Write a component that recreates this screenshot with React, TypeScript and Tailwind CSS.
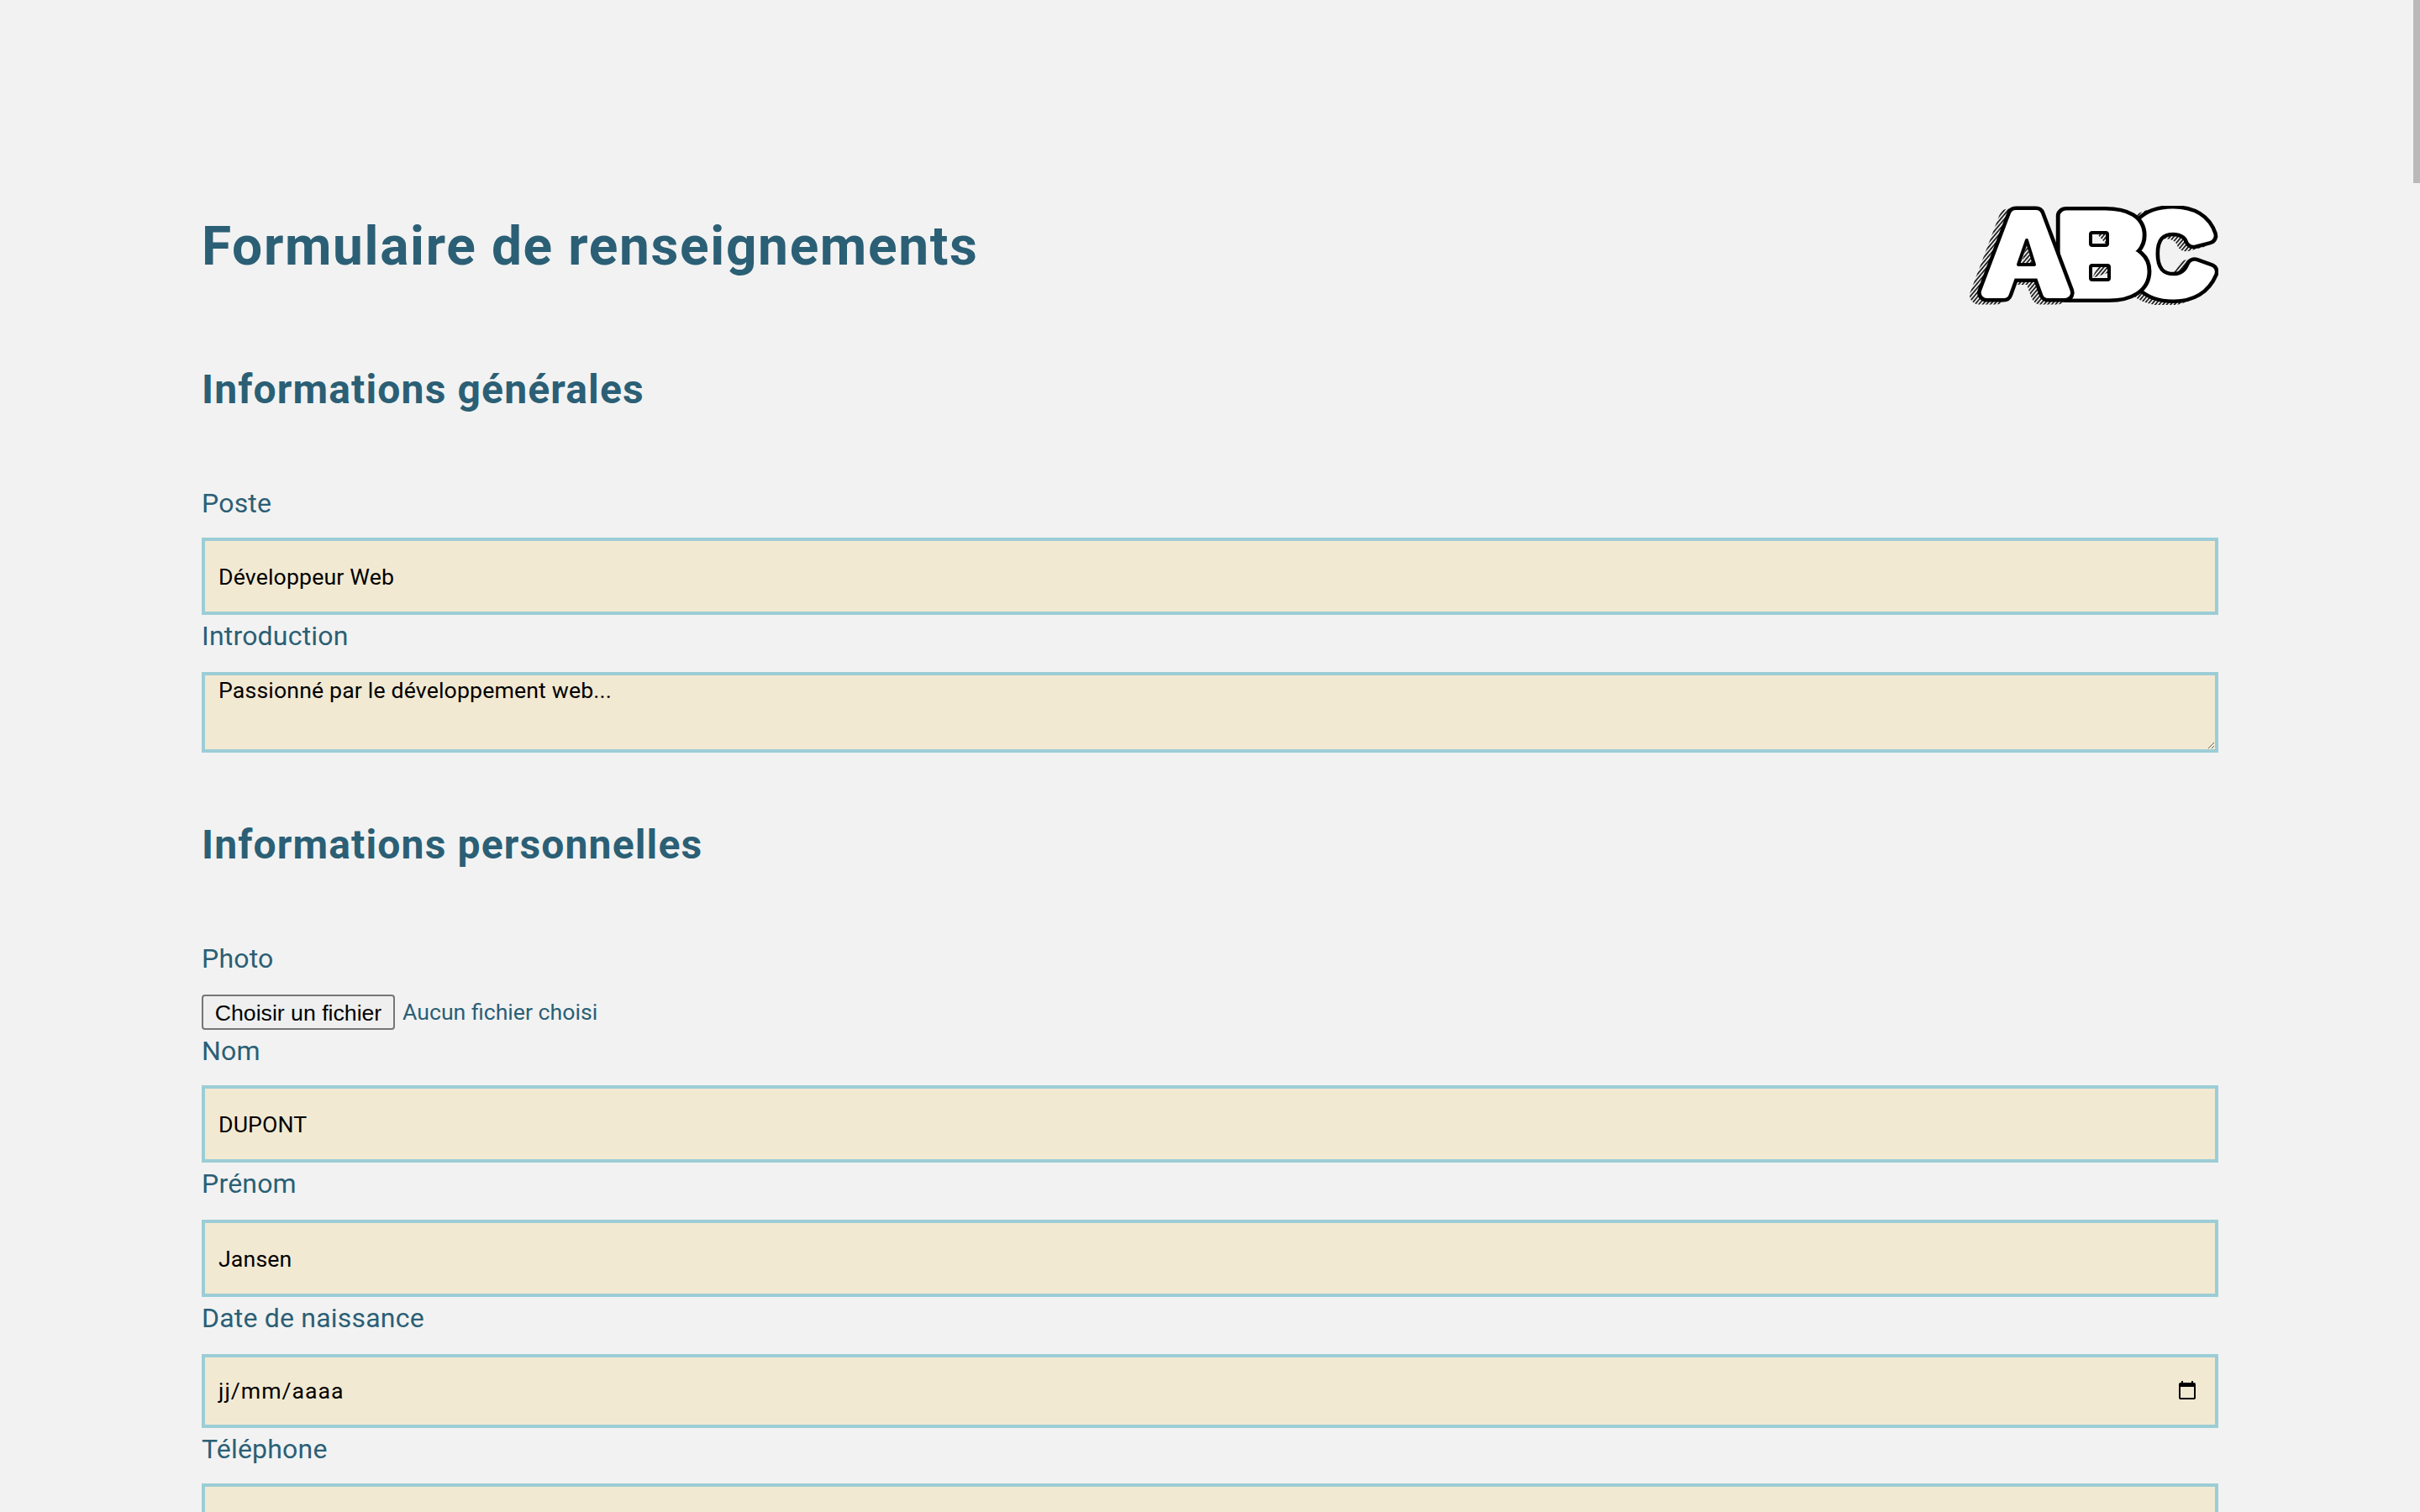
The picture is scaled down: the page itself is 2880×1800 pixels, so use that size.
const FONT_PROPS = {
  fontFamily: "Liberation Sans",
  fontWeight: 700,
  fontSize: 134,
  y: 104,
  lengthAdjust: "spacingAndGlyphs" as const,
};

function Letter({ id, hatchOnly }: { id: string; hatchOnly?: boolean }) {
  if (hatchOnly) {
    return <use href={`#${id}`} x="-9" y="3" fill="url(#hatch)" stroke="url(#hatch)" strokeWidth="22" strokeLinejoin="round" />;
  }
  return (
    <>
      <use href={`#${id}`} fill="#000" stroke="#000" strokeWidth="22" strokeLinejoin="round" />
      <use href={`#${id}`} fill="#fff" stroke="#fff" strokeWidth="13" strokeLinejoin="round" />
    </>
  );
}

function Logo() {
  return (
    <svg width="300" height="118" viewBox="0 0 300 118" className="shrink-0">
      <defs>
        <pattern id="hatch" width="3.5" height="3.5" patternUnits="userSpaceOnUse" patternTransform="rotate(40)">
          <rect width="1.8" height="3.5" fill="#222" />
        </pattern>
        <text id="la" x="21" textLength="100" {...FONT_PROPS}>A</text>
        <text id="lb" x="109" textLength="106" {...FONT_PROPS}>B</text>
        <text id="lc" x="193" textLength="100" {...FONT_PROPS}>C</text>
      </defs>
      <Letter id="la" hatchOnly />
      <Letter id="lc" hatchOnly />
      <Letter id="lc" />
      <Letter id="lb" />
      <Letter id="la" />
      {/* counters of the A and B, patched white first so the glyph's own holes don't show */}
      <path d="M71 34 L55 76 L88 76 Z" fill="#fff" />
      <rect x="144" y="24" width="42" height="30" fill="#fff" />
      <rect x="144" y="64" width="44" height="31" fill="#fff" />
      <path d="M72 41 L62 70 L81 70 Z" fill="#f2f2f2" stroke="#000" strokeWidth="4" strokeLinejoin="round" />
      <path d="M72 45 L66 68 L79 68 Z" fill="url(#hatch)" />
      <rect x="148" y="32" width="20" height="15" rx="2" fill="#f2f2f2" stroke="#000" strokeWidth="4" />
      <path d="M156 34 L166 34 L166 45 Z" fill="url(#hatch)" />
      <rect x="148" y="71" width="22" height="17" rx="2" fill="#f2f2f2" stroke="#000" strokeWidth="4" />
      <path d="M156 73 L168 73 L168 80 L150 86 Z" fill="url(#hatch)" />
    </svg>
  );
}

function Label({ children, tight }: { children: React.ReactNode; tight?: boolean }) {
  return (
    <label className={`block text-[32px] leading-[50px] tracking-[0.2px] text-[#2b5f75] ${tight ? "mb-4" : "mb-[18px]"}`}>
      {children}
    </label>
  );
}

const fieldCls =
  "block w-full border-4 border-[#9ccdd6] bg-[#f2e9d2] pl-4 text-[26.67px] tracking-[0.15px] text-black outline-none";

function TextField({ label, value, tight }: { label: string; value: string; tight?: boolean }) {
  return (
    <div>
      <Label tight={tight}>{label}</Label>
      <input type="text" defaultValue={value} className={`${fieldCls} h-[92px] pt-[2px]`} />
    </div>
  );
}

export default function App() {
  return (
    <div className="relative h-screen overflow-hidden bg-[#f2f2f2] font-['Roboto',sans-serif]">
      {/* scrollbar thumb */}
      <div className="absolute top-0 right-0 h-[218px] w-2 bg-[#b9b9b9]" />
      <form className="px-[240px] pt-[245px]">
        <div className="flex items-start justify-between">
          <h1 className="text-[64px] leading-[98px] font-bold tracking-[1.65px] text-[#2b5f75]">Formulaire de renseignements</h1>
          <Logo />
        </div>

        <h2 className="mt-[71px] text-[48px] leading-[60px] font-bold tracking-[1.15px] text-[#2b5f75]">Informations générales</h2>
        <div className="mt-20">
          <TextField label="Poste" value="Développeur Web" tight />
          <Label>Introduction</Label>
          <textarea
            defaultValue="Passionné par le développement web..."
            className={`${fieldCls} h-[96px] pt-[5px] align-top leading-[26px]`}
          />
        </div>

        <h2 className="mt-20 text-[48px] leading-[60px] font-bold tracking-[1.15px] text-[#2b5f75]">Informations personnelles</h2>
        <div className="mt-20">
          <Label>Photo</Label>
          <div className="flex h-[42px] items-center gap-[9px]">
            <button type="button" className="h-[42px] w-[230px] rounded-[4px] border-2 border-[#767676] bg-[#efefef] pb-1 font-['Liberation_Sans',sans-serif] text-[26.67px] text-black">
              Choisir un fichier
            </button>
            <span className="text-[26.67px] text-[#2b5f75]">Aucun fichier choisi</span>
          </div>
          <TextField label="Nom" value="DUPONT" tight />
          <TextField label="Prénom" value="Jansen" />
          <Label>Date de naissance</Label>
          <div className={`${fieldCls} flex h-[88px] items-center justify-between pr-[23px]`}>
            <span className="tracking-[1px]">jj/mm/aaaa</span>
            <svg width="20" height="22" viewBox="0 0 20 22" className="mb-[2px]">
              <path d="M3 0h2v2h10V0h2v2h1a2 2 0 0 1 2 2v16a2 2 0 0 1-2 2H2a2 2 0 0 1-2-2V4a2 2 0 0 1 2-2h1z" fill="#000" />
              <rect x="2" y="7" width="16" height="13" fill="#f2e9d2" />
            </svg>
          </div>
          <TextField label="Téléphone" value="" tight />
        </div>
      </form>
    </div>
  );
}
